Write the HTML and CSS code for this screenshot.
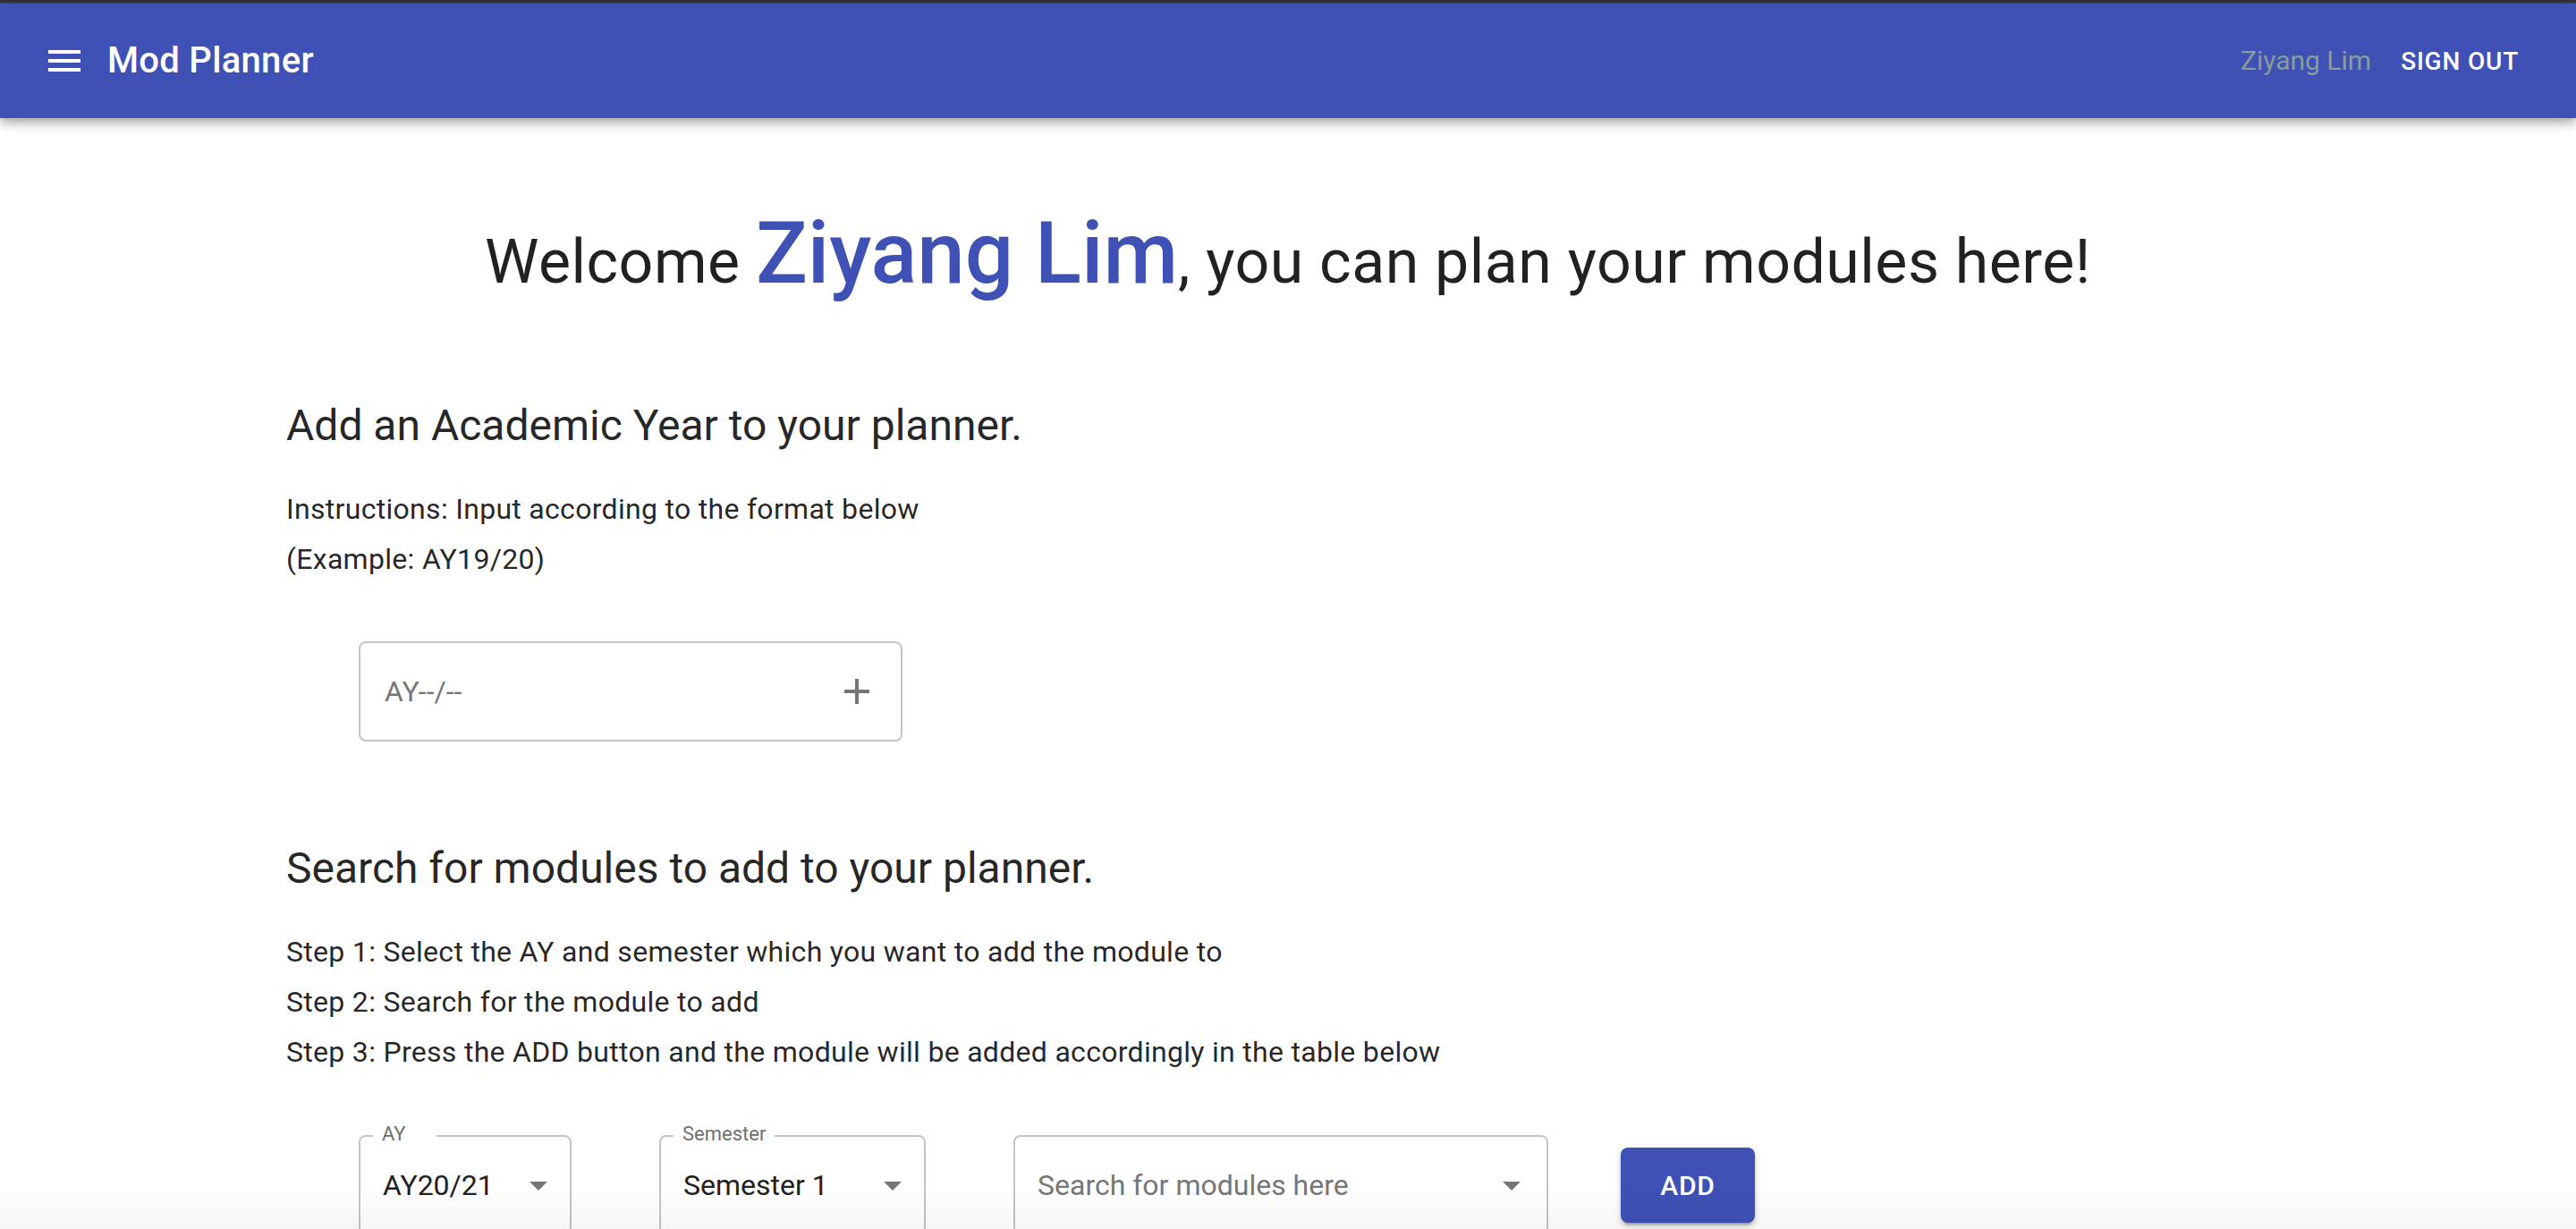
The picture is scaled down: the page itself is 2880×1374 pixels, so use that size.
FILE: index.html
```html
<!DOCTYPE html>
<html lang="en">
<head>
<meta charset="utf-8">
<title>Mod Planner</title>
<link rel="stylesheet" href="styles.css">
</head>
<body>
<div class="frame-top"></div>
<header class="appbar">
  <div class="toolbar">
    <button class="menu-btn" aria-label="menu">
      <svg viewBox="0 0 24 24" width="48" height="48"><path fill="#fff" d="M3 18h18v-2H3v2zm0-5h18v-2H3v2zm0-7v2h18V6H3z"/></svg>
    </button>
    <h6 class="brand">Mod Planner</h6>
    <span class="user">Ziyang Lim</span>
    <button class="signout">Sign out</button>
  </div>
</header>
<main class="page">
  <h1 class="welcome">Welcome <span class="name">Ziyang Lim</span>, you can plan your modules here!</h1>

  <section class="section section-ay">
    <h2 class="section-title">Add an Academic Year to your planner.</h2>
    <div class="lines">
      <p class="line">Instructions: Input according to the format below</p>
      <p class="line">(Example: AY19/20)</p>
    </div>
    <div class="ay-input">
      <span class="placeholder">AY--/--</span>
      <svg class="plus" viewBox="0 0 24 24" width="48" height="48"><path fill="#757575" d="M19 13h-6v6h-2v-6H5v-2h6V5h2v6h6v2z"/></svg>
    </div>
  </section>

  <section class="section section-search">
    <h2 class="section-title">Search for modules to add to your planner.</h2>
    <div class="lines">
      <p class="line">Step 1: Select the AY and semester which you want to add the module to</p>
      <p class="line">Step 2: Search for the module to add</p>
      <p class="line">Step 3: Press the ADD button and the module will be added accordingly in the table below</p>
    </div>
    <div class="controls">
      <div class="select select-ay">
        <span class="legend legend-ay">AY</span>
        <span class="value">AY20/21</span>
        <svg class="arrow" viewBox="0 0 24 24" width="48" height="48"><path fill="#757575" d="M7 10l5 5 5-5z"/></svg>
      </div>
      <div class="select select-sem">
        <span class="legend legend-sem">Semester</span>
        <span class="value">Semester 1</span>
        <svg class="arrow" viewBox="0 0 24 24" width="48" height="48"><path fill="#757575" d="M7 10l5 5 5-5z"/></svg>
      </div>
      <div class="select select-search">
        <span class="value placeholder">Search for modules here</span>
        <svg class="arrow" viewBox="0 0 24 24" width="48" height="48"><path fill="#757575" d="M7 10l5 5 5-5z"/></svg>
      </div>
      <button class="add-btn">Add</button>
    </div>
  </section>
</main>
<div class="bottom-fade"></div>
</body>
</html>
```

FILE: styles.css
```css
html, body {
  margin: 0;
  padding: 0;
}

body {
  background: #ffffff;
  font-family: Roboto, "Noto Sans", "Liberation Sans", Arial, sans-serif;
  color: rgba(0, 0, 0, 0.87);
  overflow: hidden;
}

.frame-top {
  height: 4px;
  background: linear-gradient(#2c2c2c, #464646);
}

.appbar {
  position: relative;
  z-index: 2;
  background: #3f51b5;
  color: #fff;
  box-shadow: 0 4px 8px -2px rgba(0, 0, 0, 0.2),
              0 8px 10px 0 rgba(0, 0, 0, 0.14),
              0 2px 20px 0 rgba(0, 0, 0, 0.12);
}

.toolbar {
  display: flex;
  align-items: center;
  height: 128px;
  padding: 0 48px;
}

.menu-btn {
  display: flex;
  align-items: center;
  justify-content: center;
  width: 96px;
  height: 96px;
  margin-left: -24px;
  padding: 0;
  border: 0;
  background: none;
}

.brand {
  flex: 1;
  margin: 0;
  font-size: 40px;
  font-weight: 500;
  line-height: 64px;
  letter-spacing: 0.0075em;
}

.user {
  font-size: 30px;
  line-height: 48px;
  color: #8a9b9c;
  margin-right: 17px;
}

.signout {
  font-family: Roboto, "Noto Sans", sans-serif;
  font-size: 28px;
  font-weight: 500;
  line-height: 49px;
  letter-spacing: 0.02857em;
  text-transform: uppercase;
  color: #fff;
  background: none;
  border: 0;
  padding: 12px 16px;
}

.page {
  padding-top: 103px;
}

.welcome {
  margin: 0;
  text-align: center;
  font-size: 68px;
  font-weight: 400;
  line-height: 68px;
  letter-spacing: 0.00735em;
  color: rgba(0, 0, 0, 0.87);
}

.welcome .name {
  font-size: 96px;
  line-height: 96px;
  font-weight: 500;
  letter-spacing: 0;
  color: #3f51b5;
}

.section {
  padding-left: 320px;
}

.section-ay {
  margin-top: 113px;
}

.section-search {
  margin-top: 110px;
}

.section-title {
  margin: 0;
  font-size: 48px;
  font-weight: 400;
  line-height: 64px;
}

.lines {
  margin-top: 33px;
}

.line {
  margin: 0;
  font-size: 32px;
  line-height: 56px;
  letter-spacing: 0.00938em;
}

.ay-input {
  box-sizing: border-box;
  display: flex;
  align-items: center;
  width: 608px;
  height: 112px;
  margin: 64px 0 0 81px;
  padding: 0 25px 0 27px;
  border: 2px solid #c4c4c4;
  border-radius: 8px;
}

.placeholder {
  flex: 1;
  font-size: 32px;
  line-height: 32px;
  color: #767676;
}

.controls {
  display: flex;
  align-items: center;
  margin: 65px 0 0 81px;
}

.select {
  position: relative;
  box-sizing: border-box;
  display: flex;
  align-items: center;
  height: 112px;
  padding: 0 11px 0 25px;
  border: 2px solid #c4c4c4;
  border-radius: 8px;
}

.select-ay {
  width: 238px;
}

.select-sem {
  width: 298px;
  margin-left: 98px;
}

.select-search {
  width: 598px;
  margin-left: 98px;
  padding-right: 15px;
}

.legend {
  position: absolute;
  top: -14px;
  left: 14px;
  padding: 0 10px;
  background: #fff;
  font-size: 22px;
  line-height: 22px;
  color: #6f6f6f;
}

.legend-ay {
  padding-right: 34px;
}

.value {
  flex: 1;
  font-size: 32px;
  line-height: 32px;
  color: #212121;
}

.value.placeholder {
  color: #767676;
}

.add-btn {
  width: 150px;
  height: 84px;
  margin-left: 81px;
  padding: 0;
  border: 0;
  border-radius: 8px;
  background: #3f51b5;
  color: #fff;
  font-family: Roboto, "Noto Sans", sans-serif;
  font-size: 30px;
  font-weight: 500;
  letter-spacing: 0.02857em;
  text-transform: uppercase;
  box-shadow: 0 6px 2px -4px rgba(0, 0, 0, 0.2),
              0 4px 4px 0 rgba(0, 0, 0, 0.14),
              0 2px 10px 0 rgba(0, 0, 0, 0.12);
}

.bottom-fade {
  position: fixed;
  left: 0;
  right: 0;
  bottom: 0;
  height: 48px;
  pointer-events: none;
  background: linear-gradient(rgba(0, 0, 0, 0), rgba(0, 0, 0, 0.035));
}
```
